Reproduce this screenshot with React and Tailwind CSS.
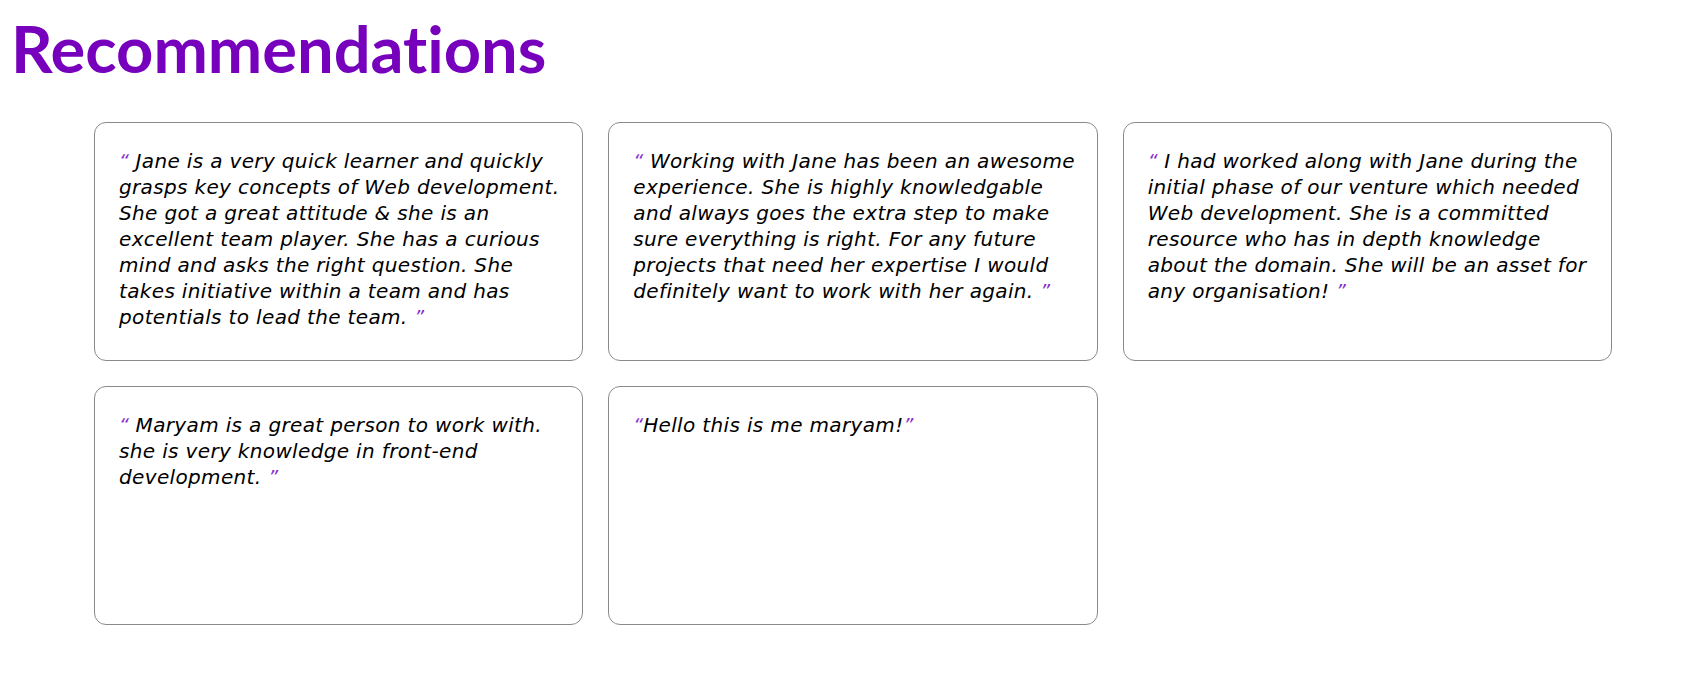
import React from 'react';

const recommendations = [
  [
    'Jane is a very quick learner and quickly',
    'grasps key concepts of Web development.',
    'She got a great attitude & she is an',
    'excellent team player. She has a curious',
    'mind and asks the right question. She',
    'takes initiative within a team and has',
    'potentials to lead the team.',
  ],
  [
    'Working with Jane has been an awesome',
    'experience. She is highly knowledgable',
    'and always goes the extra step to make',
    'sure everything is right. For any future',
    'projects that need her expertise I would',
    'definitely want to work with her again.',
  ],
  [
    'I had worked along with Jane during the',
    'initial phase of our venture which needed',
    'Web development. She is a committed',
    'resource who has in depth knowledge',
    'about the domain. She will be an asset for',
    'any organisation!',
  ],
  [
    'Maryam is a great person to work with.',
    'she is very knowledge in front-end',
    'development.',
  ],
];

const Quote = ({ children }) => (
  <span className="text-[19px] tracking-normal text-[#8a2bd0]">{children}</span>
);

const RecommendationCard = ({ lines, tight }) => (
  <div className="h-[239px] rounded-xl border border-[#8a8a8a] bg-white pl-[24px] pr-[10px] pt-[25px]">
    <p className="whitespace-nowrap text-[20px] leading-[26px] tracking-[0.35px] italic text-black">
      {lines.map((line, i) => (
        <React.Fragment key={i}>
          {i === 0 && <Quote>“</Quote>}
          {i === 0 && !tight && ' '}
          {line}
          {i === lines.length - 1 && (
            <>
              {!tight && '  '}
              <Quote>”</Quote>
            </>
          )}
          {i < lines.length - 1 && <br />}
        </React.Fragment>
      ))}
    </p>
  </div>
);

export default function App() {
  return (
    <div className="min-h-screen bg-white [font-family:'DejaVu_Sans',sans-serif]">
      <h1 className="pl-[11px] pt-[12px] text-[65px] font-bold leading-[72px] text-[#7600bc] [font-family:Lato,sans-serif] [font-variant-ligatures:none]">
        Recommendations
      </h1>
      <div className="ml-[94px] mt-[38px] grid w-[1518px] grid-cols-3 gap-[25px]">
        {recommendations.map((lines, i) => (
          <RecommendationCard key={i} lines={lines} />
        ))}
        <RecommendationCard lines={['Hello this is me maryam!']} tight />
      </div>
    </div>
  );
}
